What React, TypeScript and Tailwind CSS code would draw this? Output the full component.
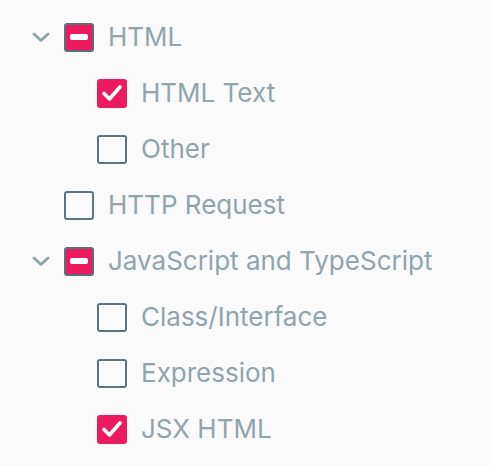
import React from "react";

type State = "checked" | "unchecked" | "indeterminate";

function Box({ state }: { state: State }) {
  if (state === "checked") {
    return (
      <div className="w-[30px] h-[29px] rounded-[3px] bg-[#ec1a5f] flex items-center justify-center shrink-0">
        <svg width="24" height="24" viewBox="0 0 24 24" fill="none">
          <path d="M4 12.5 L9.5 18 L20 6" stroke="white" strokeWidth="3.6" strokeLinecap="round" strokeLinejoin="round" />
        </svg>
      </div>
    );
  }
  if (state === "indeterminate") {
    return (
      <div className="w-[30px] h-[29px] rounded-[3px] bg-[#ec1a5f] border-2 border-[#5b6f7a] flex items-center justify-center shrink-0">
        <div className="w-[18px] h-[6px] rounded-[2px] bg-white" />
      </div>
    );
  }
  return <div className="w-[30px] h-[29px] rounded-[3px] border-2 border-[#5b7584] bg-[#fafafa] shrink-0" />;
}

function Chevron() {
  return (
    <svg width="18" height="12" viewBox="0 0 18 12" fill="none">
      <path d="M2 3 L9 9.5 L16 3" stroke="#90a4ae" strokeWidth="3" strokeLinecap="round" strokeLinejoin="round" />
    </svg>
  );
}

const rows: { label: string; state: State; level: number; chevron?: boolean }[] = [
  { label: "HTML", state: "indeterminate", level: 0, chevron: true },
  { label: "HTML Text", state: "checked", level: 1 },
  { label: "Other", state: "unchecked", level: 1 },
  { label: "HTTP Request", state: "unchecked", level: 0 },
  { label: "JavaScript and TypeScript", state: "indeterminate", level: 0, chevron: true },
  { label: "Class/Interface", state: "unchecked", level: 1 },
  { label: "Expression", state: "unchecked", level: 1 },
  { label: "JSX HTML", state: "checked", level: 1 },
];

export default function App() {
  return (
    <div className="w-[492px] h-[466px] bg-[#fafafa] pt-[9px] overflow-hidden" style={{ fontFamily: "Inter, 'Noto Sans', sans-serif" }}>
      {rows.map((r) => (
        <div key={r.label} className="h-14 flex items-center">
          {r.level === 0 ? (
            <div className="w-[64px] pl-[32px] flex items-center shrink-0">
              {r.chevron ? <Chevron /> : null}
            </div>
          ) : (
            <div className="w-[97px] shrink-0" />
          )}
          <Box state={r.state} />
          <span className="ml-[14px] text-[26px] text-[#90a4ae] leading-none">{r.label}</span>
        </div>
      ))}
    </div>
  );
}
